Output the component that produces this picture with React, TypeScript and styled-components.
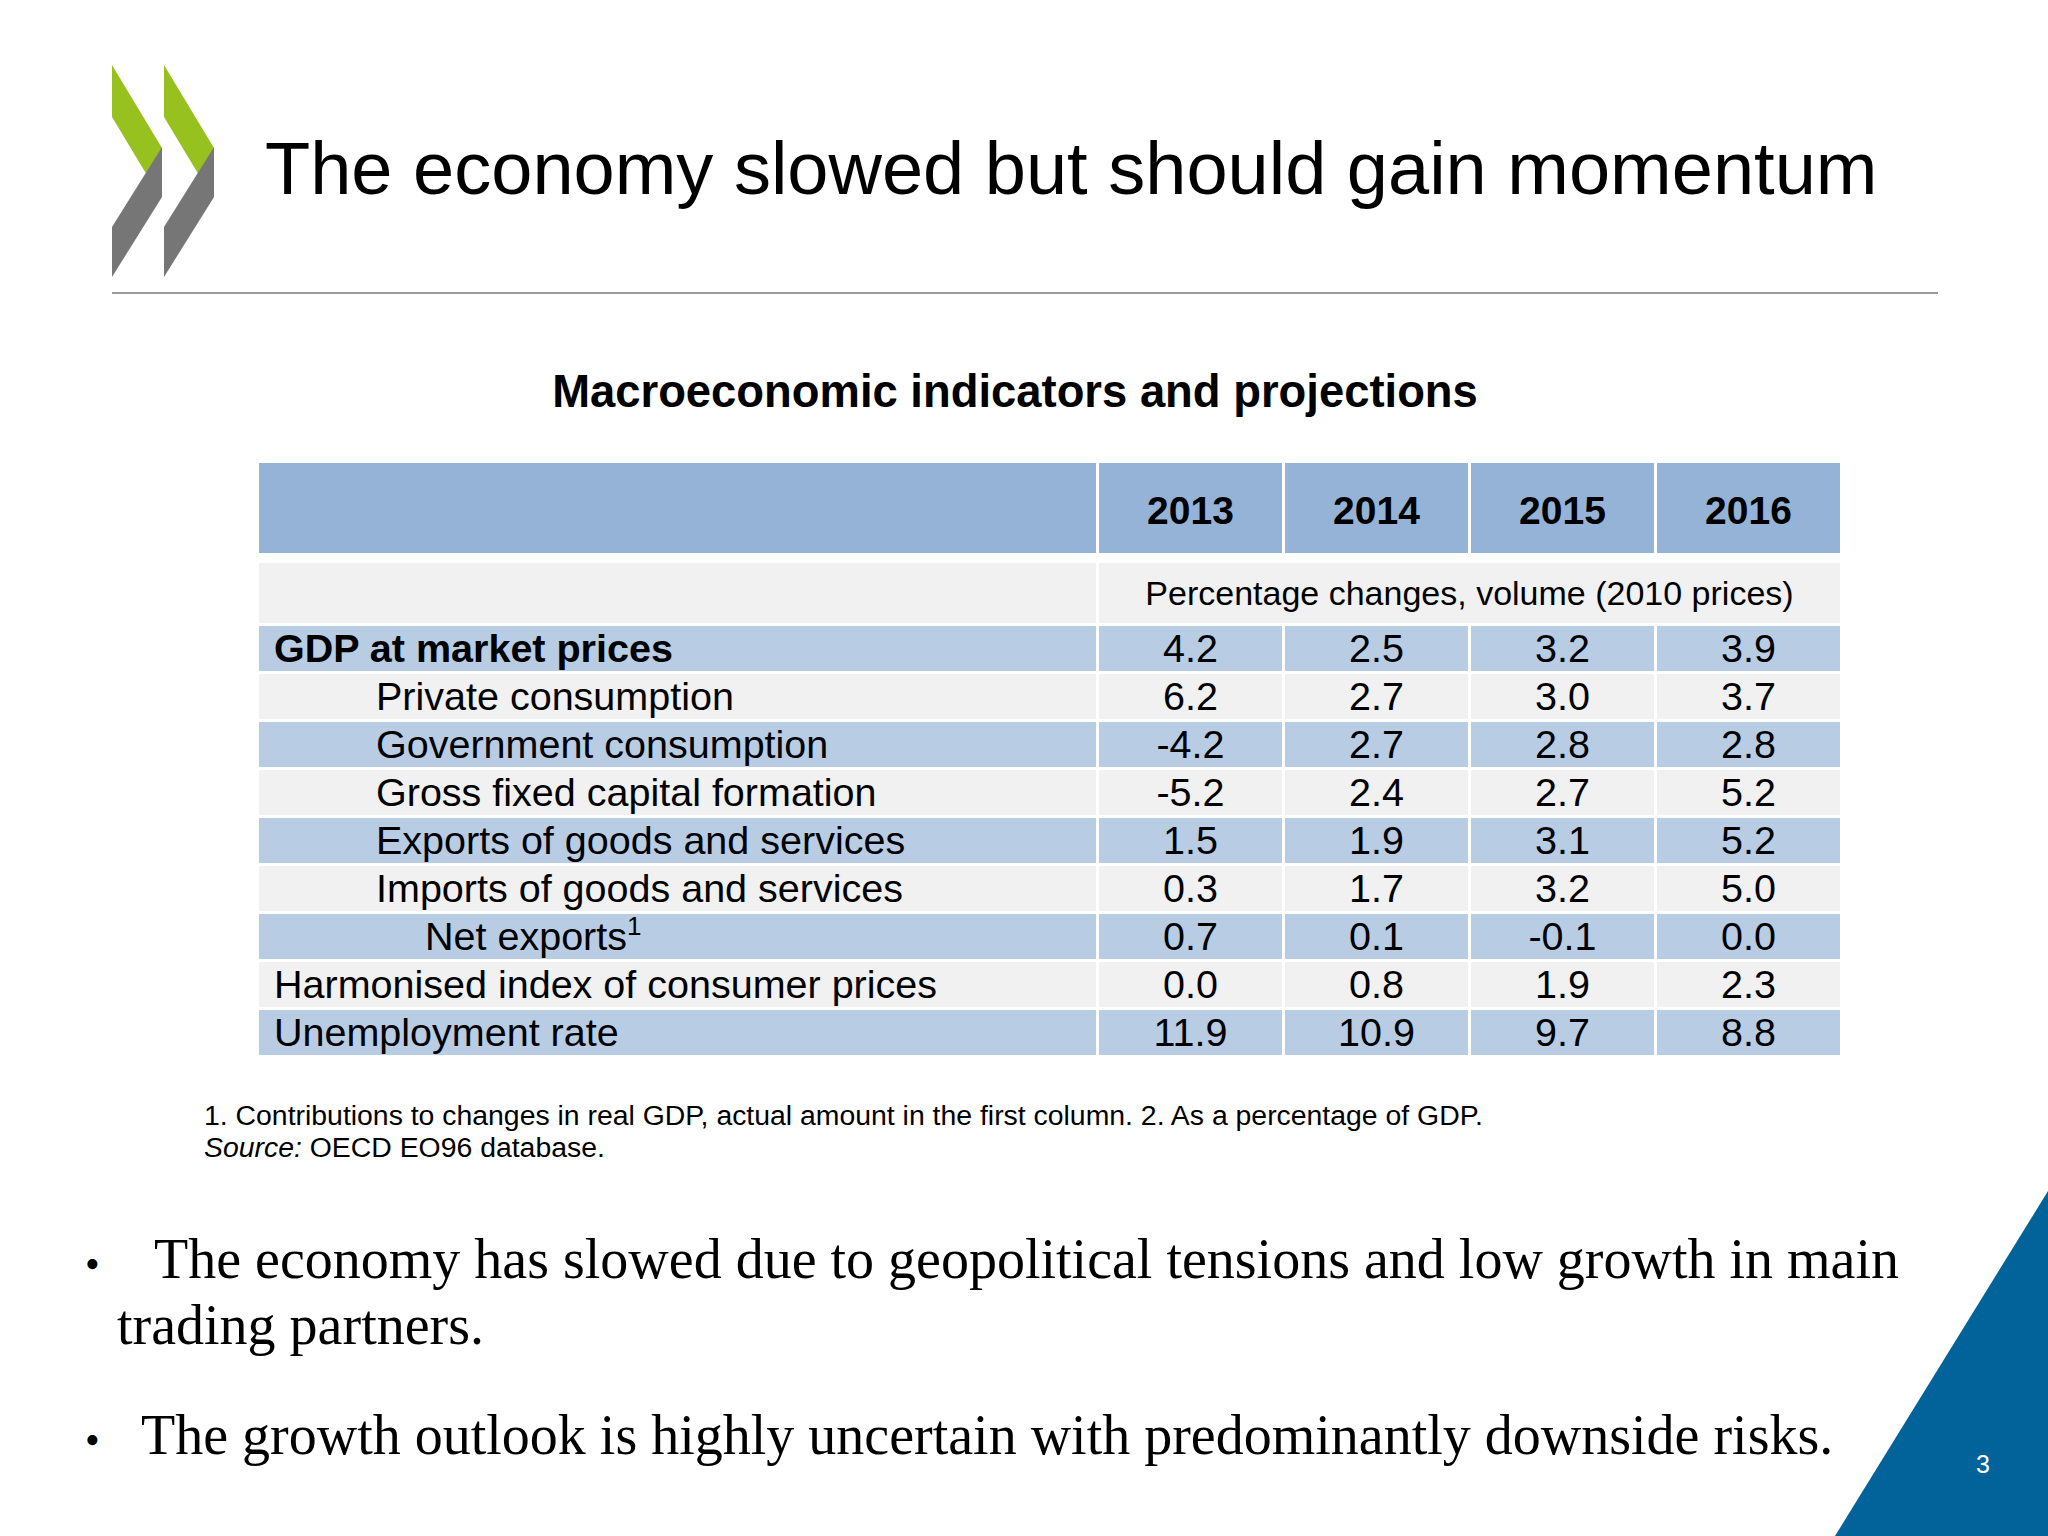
import React from 'react';
import styled, {createGlobalStyle} from "styled-components";

const GlobalStyle = createGlobalStyle`
    html, body {
        margin: 0;
        padding: 0;
        background: #ffffff;
    }
`

type RowKind = "blue" | "gray"

type DataRow = {
    label: string,
    sup?: string,
    indent: 0 | 1 | 2,
    bold?: boolean,
    values: string[],
}

const years = ["2013", "2014", "2015", "2016"]

const rows: DataRow[] = [
    {label: "GDP at market prices", indent: 0, bold: true, values: ["4.2", "2.5", "3.2", "3.9"]},
    {label: "Private consumption", indent: 1, values: ["6.2", "2.7", "3.0", "3.7"]},
    {label: "Government consumption", indent: 1, values: ["-4.2", "2.7", "2.8", "2.8"]},
    {label: "Gross fixed capital formation", indent: 1, values: ["-5.2", "2.4", "2.7", "5.2"]},
    {label: "Exports of goods and services", indent: 1, values: ["1.5", "1.9", "3.1", "5.2"]},
    {label: "Imports of goods and services", indent: 1, values: ["0.3", "1.7", "3.2", "5.0"]},
    {label: "Net exports", sup: "1", indent: 2, values: ["0.7", "0.1", "-0.1", "0.0"]},
    {label: "Harmonised index of consumer prices", indent: 0, values: ["0.0", "0.8", "1.9", "2.3"]},
    {label: "Unemployment rate", indent: 0, values: ["11.9", "10.9", "9.7", "8.8"]},
]

const Logo = () => (
    <LogoSvg viewBox="0 0 102 212" width="102" height="212">
        {[0, 52].map(dx => (
            <g key={dx} transform={`translate(${dx} 0)`}>
                <polygon points="0,0 50,83 34,108.5 0,52" fill="#97c11f"/>
                <polygon points="50,82 50,132 0,212 0,162" fill="#767676"/>
            </g>
        ))}
    </LogoSvg>
)

export default function App() {
    return (
        <Page>
            <GlobalStyle/>
            <Header>
                <Logo/>
                <Title>The economy slowed but should gain momentum</Title>
            </Header>
            <Rule/>

            <Subtitle>Macroeconomic indicators and projections</Subtitle>

            <Table>
                <Row h={90}>
                    <HeadCell/>
                    {years.map(y => <HeadCell key={y}>{y}</HeadCell>)}
                </Row>
                <Row h={60}>
                    <Cell kind="gray"/>
                    <UnitCell>Percentage changes, volume (2010 prices)</UnitCell>
                </Row>
                {rows.map((r, i) => {
                    const kind: RowKind = i % 2 === 0 ? "blue" : "gray"
                    return (
                        <Row key={r.label} h={45}>
                            <LabelCell kind={kind} indent={r.indent} bold={r.bold}>
                                <span>{r.label}{r.sup && <Sup>{r.sup}</Sup>}</span>
                            </LabelCell>
                            {r.values.map((v, j) => <Cell key={j} kind={kind}>{v}</Cell>)}
                        </Row>
                    )
                })}
            </Table>

            <Notes>
                <div>1. Contributions to changes in real GDP, actual amount in the first column. 2. As a percentage of GDP.</div>
                <div><em>Source:</em> OECD EO96 database.</div>
            </Notes>

            <Bullets>
                <Bullet>
                    <Dot gap={69}>•</Dot>The economy has slowed due to geopolitical tensions and low growth in main trading partners.
                </Bullet>
                <Bullet>
                    <Dot gap={56}>•</Dot>The growth outlook is highly uncertain with predominantly downside risks.
                </Bullet>
            </Bullets>

            <Corner viewBox="0 0 213 345" width="213" height="345">
                <polygon points="213,0 213,345 0,345" fill="#02639b"/>
            </Corner>
            <PageNumber>3</PageNumber>
        </Page>
    )
}

const Page = styled.div`
    position: relative;
    width: 2048px;
    height: 1536px;
    overflow: hidden;
    background: #ffffff;
    color: #000000;
    font-family: "Liberation Sans", Arial, sans-serif;
`

const Header = styled.header`
    display: flex;
    align-items: flex-start;
    padding: 65px 0 0 112px;
`

const LogoSvg = styled.svg`
    display: block;
    flex-shrink: 0;
`

const Title = styled.h1`
    margin: 67px 0 0 51px;
    font-size: 74px;
    line-height: 74px;
    font-weight: 400;
    white-space: nowrap;
`

const Rule = styled.div`
    margin: 15px 0 0 112px;
    width: 1826px;
    height: 2px;
    background: #9a9a9a;
`

const Subtitle = styled.h2`
    margin: 75px 0 0 0;
    width: 2030px;
    text-align: center;
    font-size: 45.4px;
    line-height: 45px;
    font-weight: 700;
`

const Table = styled.div`
    display: flex;
    flex-direction: column;
    gap: 3px;
    margin: 49px 0 0 259px;
    width: 1581px;

    & > :first-child {
        margin-bottom: 7px;
    }
`

const Row = styled.div<{h: number}>`
    display: grid;
    grid-template-columns: 837px repeat(4, 183px);
    column-gap: 3px;
    height: ${p => p.h}px;
`

const HeadCell = styled.div`
    display: flex;
    align-items: center;
    justify-content: center;
    padding-top: 5px;
    background: #95b3d7;
    font-size: 39px;
    font-weight: 700;
`

const Cell = styled.div<{kind: RowKind}>`
    display: flex;
    align-items: center;
    justify-content: center;
    background: ${p => p.kind === "blue" ? "#b8cce4" : "#f1f1f1"};
    font-size: 39.5px;
    line-height: 45px;
`

const LabelCell = styled(Cell)<{indent: 0 | 1 | 2, bold?: boolean}>`
    justify-content: flex-start;
    padding-left: ${p => [15, 117, 166][p.indent]}px;
    font-weight: ${p => p.bold ? 700 : 400};
    white-space: nowrap;
`

const UnitCell = styled.div`
    grid-column: span 4;
    display: flex;
    align-items: center;
    justify-content: center;
    background: #f1f1f1;
    font-size: 34px;
`

const Sup = styled.sup`
    font-size: 26px;
    line-height: 0;
    vertical-align: 15px;
`

const Notes = styled.div`
    margin: 44px 0 0 204px;
    font-size: 28.4px;
    line-height: 32px;
`

const Bullets = styled.div`
    display: flex;
    flex-direction: column;
    gap: 49px;
    margin-top: 66px;
    padding: 0 100px 0 117px;
    font-family: "Liberation Serif", "Times New Roman", serif;
    font-size: 56px;
    line-height: 61px;
`

const Bullet = styled.p`
    margin: 0;
    text-indent: -32px;
`

const Dot = styled.span<{gap: number}>`
    display: inline-block;
    width: ${p => p.gap}px;
    text-indent: 0;
    font-size: 42px;
`

const Corner = styled.svg`
    position: absolute;
    right: 0;
    bottom: 0;
    display: block;
`

const PageNumber = styled.div`
    position: absolute;
    left: 1976px;
    top: 1449px;
    color: #ffffff;
    font-size: 25px;
    line-height: 30px;
`
